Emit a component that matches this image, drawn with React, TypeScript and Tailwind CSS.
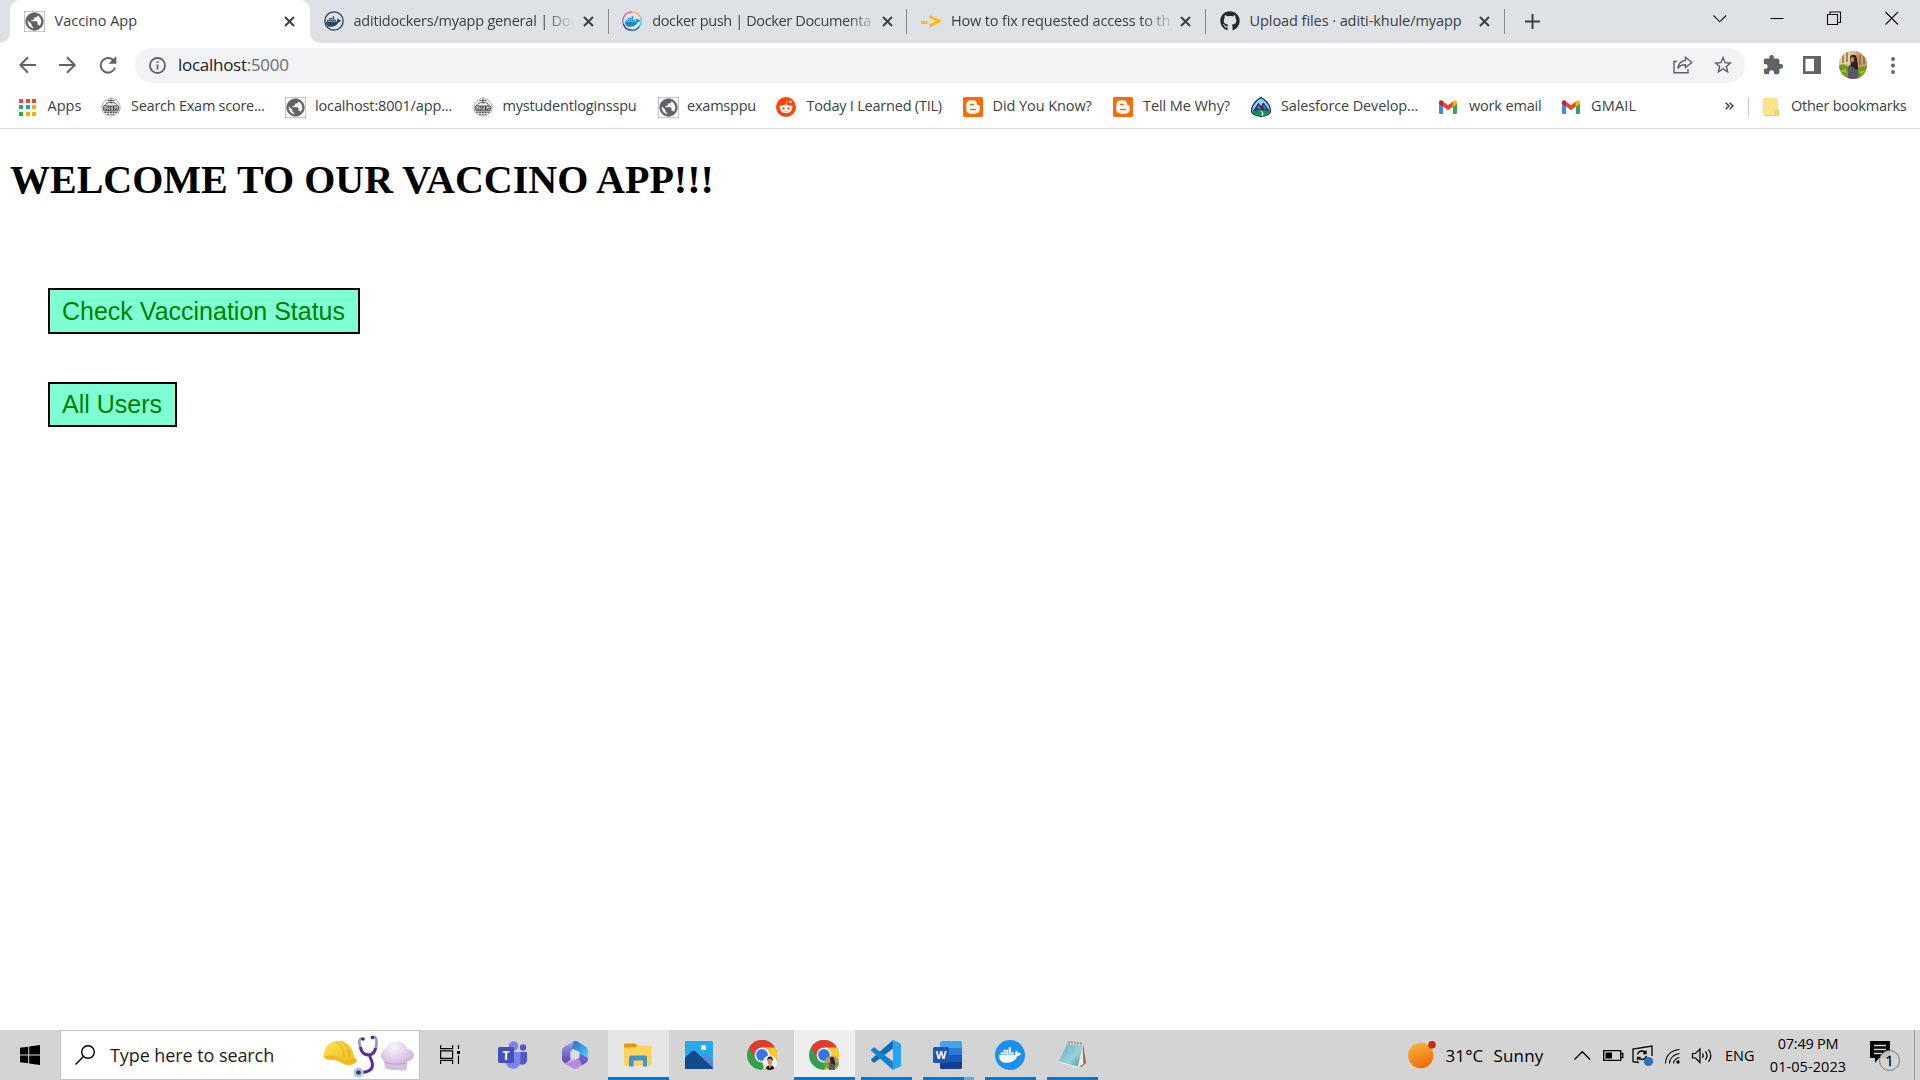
import React from "react";
import { FaGithub, FaDocker, FaRedditAlien } from "react-icons/fa";
import { SiBlogger } from "react-icons/si";
import { MdExtension, MdStarBorder, MdPublic } from "react-icons/md";

/* ---------- Small icons ---------- */

const Globe = () => <MdPublic className="-m-[1.5px] size-[21px] shrink-0 stroke-[#5f6368] stroke-[0.8] text-[#5f6368]" />;

const CloseX = () => (
  <svg className="size-[11px] shrink-0" viewBox="0 0 11 11">
    <path d="M1 1l9 9M10 1l-9 9" stroke="#3c4043" strokeWidth="2" />
  </svg>
);

const DockerRound = ({ multi = false }: { multi?: boolean }) => (
  <span className="relative flex size-5 shrink-0 items-center justify-center">
    <svg className="absolute inset-0 size-5" viewBox="0 0 20 20" fill="none" strokeWidth="1.3">
      {multi ? (
        <>
          <path d="M10 .8A9.2 9.2 0 0 1 18.5 6.500" stroke="#f9a86b" />
          <path d="M18.500 6.500A9.200 9.200 0 0 1 17.500 15.300" stroke="#35d6e6" />
          <path d="M17.500 15.300A9.200 9.200 0 0 1 10 19.200" stroke="#1d5fc4" />
          <path d="M10 19.200A9.200 9.200 0 0 1 1.200 12.500" stroke="#27408b" />
          <path d="M1.200 12.500A9.200 9.200 0 0 1 2.800 4.300" stroke="#b06ad4" />
          <path d="M2.800 4.300A9.200 9.200 0 0 1 10 .8" stroke="#f2545b" />
        </>
      ) : (
        <circle cx="10" cy="10" r="9.2" stroke="#27475d" />
      )}
    </svg>
    <FaDocker className={multi ? "size-[15px] text-[#1488c6]" : "size-[15px] text-[#27475d]"} />
  </span>
);

const ArrowTag = () => (
  <svg className="size-5 shrink-0" viewBox="0 0 20 20" fill="none" stroke="#fdbc13" strokeWidth="3">
    <path d="M0 11.500h6.500M8.500 5.500l10 4.600-10 4.700" />
  </svg>
);

const AppsGrid = () => {
  const c = ["#f44336", "#f44336", "#f44336", "#34a853", "#2196f3", "#fbaa05", "#34a853", "#fbaa05", "#fbaa05"];
  return (
    <span className="grid grid-cols-3 gap-[2.5px]">
      {c.map((x, i) => (
        <i key={i} className="size-1" style={{ background: x }} />
      ))}
    </span>
  );
};

const Emblem = () => (
  <svg className="size-5 shrink-0" viewBox="0 0 20 20" fill="none" stroke="#555" strokeWidth=".8">
    <path d="M10 .5l4 1.800 3.500 2.700 1.800 4.500-.8 5-3 3-5.500 2-5.500-2-3-3-.8-5L2.500 5 6 2.300z" fill="#ececec" stroke="#aaa" />
    <path d="M10 1.500v5M6.500 3.500h7M5 6.500c3-1.500 7-1.500 10 0" stroke="#444" />
    <path d="M2 10.500c1-3 3-3 4.500-1.500h7c1.500-1.500 3.500-1.500 4.500 1.500l-1 3.500H3z" fill="#999" stroke="#444" />
    <path d="M4 11l2 2m1.500-3.500v4m2.500-4v4m2.500-4v4m3.500-2.500l-2 2" stroke="#222" />
    <path d="M7.200 10.500v2m3.800-2.500v3M4.500 10v1.500M15 10v1.500" stroke="#eee" />
    <path d="M3.500 15.500h13M6 17.300h8" stroke="#555" strokeWidth="1.100" strokeDasharray="2 .7" />
  </svg>
);

const Reddit = () => (
  <span className="flex size-5 shrink-0 items-center justify-center rounded-full bg-[#ff4500]">
    <FaRedditAlien className="size-[14px] text-white" />
  </span>
);

const Blogger = () => <SiBlogger className="size-5 shrink-0 text-[#ff6a00]" />;

const Trailhead = () => (
  <svg className="size-5 shrink-0" viewBox="0 0 20 20">
    <path d="M10 .6C6.500 2 1.800 6.500.7 12c-.4 2.500.2 4.300 1.800 5.200 4 2.700 11 2.700 15 0 1.600-.9 2.200-2.700 1.800-5.200C18.200 6.500 13.500 2 10 .6z" fill="#8ed0f5" stroke="#12365f" strokeWidth="1.300" />
    <path d="M2.500 14l5-7.500 2.500 3.500 2.500-4 5.500 8z" fill="#3c2f74" stroke="#1b2858" />
    <path d="M6 10l1.500-2 2 3-1 2zM12 9l1-1.500 2 4-1.500 1z" fill="#9a5fb0" />
    <path d="M1.500 14c4-1.500 13-1.500 17 0-.2 1.500-.8 2.300-1.800 2.800-4 2.300-9.500 2.300-13.400 0-1-.5-1.600-1.300-1.800-2.800z" fill="#0c9150" />
    <path d="M9.300 14l1.800 1.800-.8 2.600h1.800l.2-3-2-1.600z" fill="#fff" />
  </svg>
);

const Gmail = () => (
  <svg className="h-[14px] w-[18px] shrink-0" viewBox="0 0 18 14">
    <path d="M0 2h4.100v12H1.200A1.200 1.200 0 0 1 0 12.800z" fill="#4285f4" />
    <path d="M13.900 2H18v10.800a1.200 1.200 0 0 1-1.200 1.200h-2.900z" fill="#34a853" />
    <path d="M4.100 1.400L9 5.200l4.900-3.800v5.200L9 10.300 4.100 6.600z" fill="#ea4335" />
    <path d="M13.900 1.400l.9-.8C16.100-.4 18 .5 18 2.100V3.800l-4.100 3z" fill="#fbbc04" />
    <path d="M0 2.100C0 .5 1.900-.4 3.200.6l.9.800v5.400L0 3.800z" fill="#c5221f" />
  </svg>
);

/* ---------- Tab strip ---------- */

type Tab = { icon: React.ReactNode; title: string; cls: string };

const tabs: Tab[] = [
  {
    icon: <DockerRound />,
    title: "aditidockers/myapp general | Doc",
    cls: "tracking-[-0.22px] [mask-image:linear-gradient(to_right,black_190px,transparent_220px)]",
  },
  {
    icon: <DockerRound multi />,
    title: "docker push | Docker Documenta",
    cls: "tracking-[-0.36px] [mask-image:linear-gradient(to_right,black_195px,transparent_228px)]",
  },
  {
    icon: <ArrowTag />,
    title: "How to fix requested access to th",
    cls: "tracking-[-0.15px] [mask-image:linear-gradient(to_right,black_190px,transparent_226px)]",
  },
  {
    icon: <FaGithub className="size-5 shrink-0 text-[#24292f]" />,
    title: "Upload files · aditi-khule/myapp",
    cls: "tracking-[-0.07px]",
  },
];

const TabStrip = () => (
  <div className="flex h-[43px] bg-[#dee1e6]">
    <div className="w-[10px] bg-white">
      <div className="size-full rounded-br-[10px] bg-[#dee1e6]" />
    </div>
    <div className="flex w-[300px] items-center rounded-t-[10px] bg-white pr-[15px] pb-px pl-[15.5px]">
      <Globe />
      <span className="ml-[11px] flex-1 text-[14.5px]">Vaccino App</span>
      <CloseX />
    </div>
    <div className="w-[13px] bg-white">
      <div className="size-full rounded-bl-[10px] bg-[#dee1e6]" />
    </div>
    {tabs.map((t, i) => (
      <div key={i} className="flex w-[298.7px] items-center pb-px">
        <span className="ml-[0.5px] flex">{t.icon}</span>
        <span className="ml-[10px] flex w-[220px]">
          <span className={"shrink-0 text-[14.5px] whitespace-nowrap " + t.cls}>{t.title}</span>
        </span>
        <span className="ml-[9.500px]">
          <CloseX />
        </span>
        <span className="mt-px ml-[13.500px] h-[25px] w-px bg-[#85888c]" />
      </div>
    ))}
    <svg className="mt-[14px] ml-[7px] size-[15px]" viewBox="0 0 15 15">
      <path d="M7.500 0v15M0 7.500h15" stroke="#3c4043" strokeWidth="2" />
    </svg>
    <div className="ml-auto flex h-9 items-center pr-[21.5px]">
      <svg className="h-[14px] w-[186px]" viewBox="0 0 186 14" fill="none" stroke="#111" strokeWidth="1.100">
        <path d="M.5 4.500l6.300 6.300 6.300-6.300" />
        <path d="M57.500 7.500h13" />
        <path d="M114.500 3.500h10v10h-10zM117 3.500v-2.500h10.500v10.500h-3" />
        <path d="M172.500 1l12.500 12.500M185 1l-12.500 12.500" />
      </svg>
    </div>
  </div>
);

/* ---------- Address row ---------- */

const Avatar = () => (
  <svg className="size-7 rounded-full" viewBox="0 0 28 28">
    <rect width="28" height="28" fill="#d9bd92" />
    <path d="M0 0h11v13H0z" fill="#e9cf9f" />
    <path d="M17 0h11v16H17z" fill="#c89a6c" />
    <path d="M4 3v9M8 1v10M21 4v10M25 5v8" stroke="#8d6a4b" strokeWidth="1.500" />
    <path d="M0 15c4-3 7-1 9 1v12H0zM18 17c4-2 7-1 10-2v13H18z" fill="#6f9a1e" />
    <path d="M1 20l5-2 2 4zM20 21l6-2-3 4z" fill="#a5c63b" />
    <path d="M9 16c1-2 3-2.500 5-2.500s4 1 4.500 3L20 28H9z" fill="#5c5866" />
    <path d="M11 6c1-3 6-3 6.500 0 1 4 2 9 1.500 13l-3-1-4-3z" fill="#30221f" />
    <ellipse cx="13.300" cy="8.500" rx="1.900" ry="2.700" fill="#b98263" />
  </svg>
);

const AddressRow = () => (
  <div className="flex h-[43px] items-center bg-white pt-px pl-[19px]">
    <svg className="h-[18px] w-[98px]" viewBox="0 0 98 18" fill="none" stroke="#5f6368" strokeWidth="2">
      <path d="M17 9H1.500M9 1.300L1.300 9 9 16.700" />
      <path d="M40 9h15.500M48 1.300L55.700 9 48 16.700" />
      <path d="M95 5A7.300 7.300 0 1 0 96 11.500" />
      <path d="M97.300 0v7.800h-7.800z" fill="#5f6368" stroke="none" />
    </svg>
    <div className="ml-[18px] flex h-[35px] w-[1610px] items-center rounded-full bg-[#f1f3f4] pr-[11px] pl-[14px]">
      <svg className="size-[17px]" viewBox="0 0 17 17" fill="none" stroke="#5f6368" strokeWidth="1.800">
        <circle cx="8.500" cy="8.500" r="7.500" />
        <path d="M8.500 7.500v5M8.500 4.200v1.900" />
      </svg>
      <span className="ml-[12px] flex-1 text-[17px] tracking-[-0.28px] text-[#202124]">
        localhost<span className="text-[#6a6e73]">:5000</span>
      </span>
      <svg className="mr-[19px] h-[18px] w-5" viewBox="0 0 20 18" fill="none" stroke="#5f6368" strokeWidth="1.400">
        <path d="M4 5.500H1v11.300h14V13" />
        <path d="M12.500 1.300l6.300 5.200-6.300 5V8.700C9 8.500 6.500 9.700 4.800 12.500 5.300 8 8 5 12.500 4.300z" />
      </svg>
      <MdStarBorder className="size-[22px] text-[#5f6368]" />
    </div>
    <MdExtension className="ml-[17px] size-[22px] text-[#5f6368]" />
    <svg className="ml-[19px] size-[18px]" viewBox="0 0 18 18">
      <path d="M0 0h18v18H0zM2.500 2.800v12.400H11V2.800z" fill="#5f6368" fillRule="evenodd" />
    </svg>
    <span className="ml-[18px]">
      <Avatar />
    </span>
    <svg className="ml-[23.5px] h-[17px] w-1" viewBox="0 0 4 17" fill="#5f6368">
      <circle cx="2" cy="2" r="1.900" />
      <circle cx="2" cy="8.500" r="1.900" />
      <circle cx="2" cy="15" r="1.900" />
    </svg>
  </div>
);

/* ---------- Bookmarks bar ---------- */

const bookmarks: { icon: React.ReactNode; label: string; box: string; pad: string; track: string }[] = [
  { icon: <AppsGrid />, label: "Apps", box: "w-[82px]", pad: "w-[28.5px]", track: "" },
  { icon: <Emblem />, label: "Search Exam score...", box: "w-[185px]", pad: "w-[30px]", track: "tracking-[-0.25px]" },
  { icon: <Globe />, label: "localhost:8001/app...", box: "w-[187px]", pad: "w-[29px]", track: "tracking-[-0.15px]" },
  { icon: <Emblem />, label: "mystudentloginsspu", box: "w-[186px]", pad: "w-[29.5px]", track: "tracking-[-0.17px]" },
  { icon: <Globe />, label: "examsppu", box: "w-[117px]", pad: "w-[28px]", track: "tracking-[-0.22px]" },
  { icon: <Reddit />, label: "Today I Learned (TIL)", box: "w-[187px]", pad: "w-[30.5px]", track: "tracking-[-0.22px]" },
  { icon: <Blogger />, label: "Did You Know?", box: "w-[150px]", pad: "w-[29.5px]", track: "tracking-[-0.08px]" },
  { icon: <Blogger />, label: "Tell Me Why?", box: "w-[138px]", pad: "w-[30px]", track: "tracking-[-0.08px]" },
  { icon: <Trailhead />, label: "Salesforce Develop...", box: "w-[188px]", pad: "w-[30px]", track: "tracking-[-0.13px]" },
  { icon: <Gmail />, label: "work email", box: "w-[123px]", pad: "w-[30px]", track: "tracking-[-0.17px]" },
  { icon: <Gmail />, label: "GMAIL", box: "w-[163px]", pad: "w-[29px]", track: "tracking-[0.2px]" },
];

const BookmarksBar = () => (
  <div className="flex h-[43px] items-center border-b border-[#d5d7da] bg-white pl-[19px] text-[14.5px]">
    {bookmarks.map((b, i) => (
      <div key={i} className={"flex shrink-0 items-center whitespace-nowrap " + b.box}>
        <span className={"flex shrink-0 " + b.pad}>{b.icon}</span>
        <span className={"pb-[2px] " + b.track}>{b.label}</span>
      </div>
    ))}
    <svg className="mb-[2px] h-2 w-[9px]" viewBox="0 0 9 8" fill="none" stroke="#3c4043" strokeWidth="1.500">
      <path d="M.7.700L4 4 .7 7.300M4.700.700L8 4 4.700 7.300" />
    </svg>
    <span className="ml-[14px] h-5 w-px bg-[#c6c9cd]" />
    <svg className="ml-[14px] h-[18px] w-4" viewBox="0 0 16 18">
      <rect width="15" height="18" rx="1.500" fill="#ffe28a" />
      <path d="M15 11.500V17M12.500 17.500v-4.500q0-1 1-1h1q1 0 1 1V16q0 1.500-1.500 1.500H2" fill="none" stroke="#f5cb4d" strokeWidth="1.100" />
    </svg>
    <span className="ml-[12px] pb-[2px] tracking-[-0.24px] whitespace-nowrap">Other bookmarks</span>
  </div>
);

/* ---------- Page ---------- */

const PageButton = ({ children }: { children: React.ReactNode }) => (
  <button className="block border-2 border-black bg-[#7fffd4] pr-[12.500px] pl-3 font-['Liberation_Sans',Arial,sans-serif] text-[25px] text-[#008000]">
    {children}
  </button>
);

const Page = () => (
  <main className="flex-1 bg-white">
    <h1 className="pt-[28px] pl-[10px] font-['Liberation_Serif','Times_New_Roman',serif] text-[40px] leading-[46px] font-bold text-black">
      WELCOME TO OUR VACCINO APP!!!
    </h1>
    <div className="mt-[85px] ml-12 flex flex-col items-start gap-12">
      <div className="flex h-[46px] [&>button]:leading-[40px]">
        <PageButton>Check Vaccination Status</PageButton>
      </div>
      <div className="flex h-[45px] [&>button]:leading-[41px]">
        <PageButton>All Users</PageButton>
      </div>
    </div>
  </main>
);

/* ---------- Taskbar ---------- */

const StartLogo = () => (
  <svg className="size-5" viewBox="0 0 20 20">
    <path d="M0 2.800L8.200 1.700V9.500H0zM9.200 1.500L20 0v9.500H9.200zM0 10.500h8.200v7.800L0 17.200zM9.200 10.500H20V20L9.200 18.500z" />
  </svg>
);

const SearchArt = () => (
  <svg className="h-[46px] w-[92px]" viewBox="0 0 92 46">
    <defs>
      <radialGradient id="hat" cx=".4" cy=".2" r=".8">
        <stop offset="0" stopColor="#f8f3fb" />
        <stop offset=".5" stopColor="#e0d0ea" />
        <stop offset="1" stopColor="#c0a6d4" />
      </radialGradient>
      <linearGradient id="helm" x1="0" y1="0" x2="1" y2="1">
        <stop offset="0" stopColor="#ffe45c" />
        <stop offset="1" stopColor="#eeb410" />
      </linearGradient>
    </defs>
    <path d="M1 25C0 14 8 8 16 9c8 0 14 6 15 16l3 3c.5 2-4 5-9 5-4 0-6-3-11-4.500C9 27 3 29 1 25z" fill="url(#helm)" />
    <path d="M1 24.500c4-1.500 11-1 15 1.500 4 2 8 4 14 .5l3.500 1.500c.5 2-4 5-8.500 5-4 0-6-3-11-4.500C9 27 3 29 1 24.500z" fill="#f0b81a" />
    <path d="M13 10c5 2 8 8 8 16M17 9.200c6 2 9 7 9.500 16" fill="none" stroke="#e3b020" strokeWidth="1" />
    <path d="M39 6.500c-2.500 0-3 2-2.500 5 .5 8 4 11 9 11s8-4 8-12c0-4-.5-6-3.500-5.500" fill="none" stroke="#8f9bb0" strokeWidth="2.600" />
    <path d="M37.500 15c1 6 4 8 8 8s6-2 7-7M46.500 23c1 4 3 6 3 10 0 5-5 7-10 7.500" fill="none" stroke="#5a2ca0" strokeWidth="3" />
    <circle cx="40" cy="7" r="1.800" fill="#43248a" />
    <circle cx="49.500" cy="5.500" r="1.800" fill="#43248a" />
    <circle cx="35.500" cy="40.500" r="5" fill="#a9c8ea" />
    <circle cx="35.500" cy="40.500" r="2.300" fill="#333c4c" />
    <path d="M61 29c-5-3-4-11 2-12 1-5 6-7.500 11-7.500S83 12 84 17c7 0 9 8 4 11-1 1-3 1.500-4 1.500L83.500 38C77 38.500 68 38 62 36z" fill="url(#hat)" />
    <path d="M62 30.500c7 2 15 2.500 22 0L83.500 38C77 38.500 68 38 62 36z" fill="#d3c0e2" />
    <path d="M62 30.500c7 2 15 2.500 22 0" stroke="#b79ccc" fill="none" strokeWidth=".8" />
  </svg>
);

const TaskView = () => (
  <svg className="h-[19px] w-5" viewBox="0 0 20 19" fill="none" stroke="#000" strokeWidth="1.200">
    <path d="M.6 0v3.600h12V0M.6 19v-3.600h12V19M.6 5.800h12v7.600H.6zM18.500 0v4M18.500 10.500V19" />
    <path d="M17 6h3v3h-3z" fill="#000" stroke="none" />
  </svg>
);

const Teams = () => (
  <svg className="h-[28px] w-[29px]" viewBox="0 0 29 28">
    <circle cx="15.500" cy="5" r="4.800" fill="#7b83eb" />
    <circle cx="25" cy="6.500" r="3.200" fill="#5059c9" />
    <path d="M19 11h10v8c0 5-6 6-9 3z" fill="#5059c9" />
    <path d="M9 11h13.500v9c0 10-13.500 10-15 1z" fill="#7b83eb" />
    <rect y="6" width="16" height="16" rx="1.500" fill="#464eb8" />
    <text x="8" y="18.500" fontSize="12" fontWeight="700" fill="#fff" textAnchor="middle" fontFamily="Open Sans, sans-serif">T</text>
  </svg>
);

const M365 = () => (
  <svg className="h-[28px] w-[26px]" viewBox="0 0 26 28">
    <defs>
      <linearGradient id="mb" x1="0" y1="0" x2="1" y2="1">
        <stop offset="0" stopColor="#1f6fd0" />
        <stop offset="1" stopColor="#55d8f5" />
      </linearGradient>
      <linearGradient id="mp" x1="0" y1="0" x2="0" y2="1">
        <stop offset="0" stopColor="#9aa4f5" />
        <stop offset="1" stopColor="#5b45a8" />
      </linearGradient>
    </defs>
    <path d="M12 0L2 6Q0 7 0 9.500v9.500l3 3.500L8.500 19v-8l6-9z" fill="url(#mp)" />
    <path d="M12 .3q2-.8 4 .4l8 5q2 1.300 2 3.500V19l-8.500-3.500V11L10 7.500z" fill="url(#mb)" />
    <path d="M26 17q0 3.500-2 4.700l-8.500 5.500q-2.500 1.500-5 0L1 21.500q3 1.500 6-.3l10-6z" fill="#b78be0" />
    <path d="M26 17q0 3.500-2 4.700l-4 2.500-4-8.200 2-3z" fill="#6d5bd0" />
    <path d="M13 9l4.500 2.500v5L13 19l-4.500-2.500v-5z" fill="#dcdcdc" />
  </svg>
);

const Explorer = () => (
  <svg className="h-6 w-7" viewBox="0 0 28 24">
    <path d="M0 1.500Q0 .5 1 .5h10.500l2 2-1.500 2.500H0z" fill="#e29a00" />
    <path d="M0 4.500h11l2.500-2H26q1.500 0 1.500 1.500v17q0 1.500-1.500 1.500H1.500Q0 22.500 0 21z" fill="#ffd45c" />
    <path d="M5 23.500v-9q0-2 2-2h14q2 0 2 2v9h-4v-6H9.500v6z" fill="#3e95d2" />
  </svg>
);

const Photos = () => (
  <svg className="size-7" viewBox="0 0 28 28">
    <rect width="28" height="28" rx="1" fill="#28aae8" />
    <path d="M12 20l8-7.500 8 8V28H12z" fill="#5a86d8" />
    <path d="M0 16.500l6.500-6q2-1.500 4 0L28 27v1H0z" fill="#124a8a" />
    <circle cx="18.500" cy="6.500" r="2.600" fill="#fff" />
  </svg>
);

const Chrome = ({ badge }: { badge: "portrait" | "garden" }) => (
  <svg className="size-[30px]" viewBox="0 0 30 30">
    <circle cx="15" cy="15" r="15" fill="#34a04c" />
    <path d="M15 0a15 15 0 0 1 13 7.500H15L8.500 18.800 2 7.500A15 15 0 0 1 15 0z" fill="#e33b2e" />
    <path d="M28 7.500A15 15 0 0 1 15 30l6.500-11.200L15 7.500z" fill="#fcc934" />
    <circle cx="15" cy="15" r="7.400" fill="#fff" />
    <circle cx="15" cy="15" r="5.900" fill="#3578e5" />
    {badge === "portrait" ? (
      <g>
        <circle cx="22.800" cy="22.800" r="7.200" fill="#f3f1ee" />
        <path d="M18.800 28.700q.5-3.200 4.200-3.200t4.300 2.700q-4 3.500-8.500.5z" fill="#1d1b1d" />
        <path d="M20.300 20.500q-.3-4 2.700-4t2.900 4z" fill="#2b1a16" />
        <ellipse cx="23" cy="21.700" rx="2.200" ry="3.300" fill="#d08f6e" />
        <path d="M21.500 25l1.500 4 1.500-4z" fill="#d98a6a" />
      </g>
    ) : (
      <g>
        <circle cx="22.800" cy="22.800" r="7.200" fill="#b79a76" />
        <path d="M16 23q3-1 4 0v6q-3.500-1.500-4-6zM26 23q2-1 4 0-.5 4-4 6z" fill="#80a32e" />
        <path d="M20 30v-7q3-2 6 0v6.500q-3 1.200-6 .5z" fill="#5c5866" />
        <path d="M21 18q2-2 4 0l1.500 7-5-2z" fill="#2f2421" />
      </g>
    )}
  </svg>
);

const VSCode = () => (
  <svg className="size-[30px]" viewBox="0 0 30 30">
    <path d="M22 0v8.500L4 22.300Q3 23 2.200 22.300L.5 20.700q-.8-.9 0-1.700z" fill="#0a6fb8" />
    <path d="M22 30v-8.500L4 7.700Q3 7 2.200 7.700L.5 9.300q-.8.900 0 1.700z" fill="#1583cc" />
    <path d="M21.500 29.800q-1-.3-1.500-1.300l2-1V2.500l-2-1Q20.800.2 22 0l6.700 3Q30 3.700 30 5v20q0 1.300-1.300 2z" fill="#27a4ee" />
  </svg>
);

const Word = () => (
  <svg className="h-7 w-[29px]" viewBox="0 0 29 28">
    <path d="M7 1.500Q7 0 8.500 0H27.500Q29 0 29 1.500V7H7z" fill="#41a5ee" />
    <path d="M7 7h22v7H7z" fill="#2b7cd3" />
    <path d="M7 14h22v7H7z" fill="#185abd" />
    <path d="M7 21h22v5.500q0 1.500-1.500 1.500h-19Q7 28 7 26.500z" fill="#103f91" />
    <rect y="6" width="16" height="16" rx="1.500" fill="#1b57b4" />
    <text x="8" y="18" fontSize="11" fontWeight="700" fill="#fff" textAnchor="middle" fontFamily="Open Sans, sans-serif">W</text>
  </svg>
);

const DockerApp = () => (
  <span className="flex size-[30px] items-center justify-center rounded-full bg-[#1d8fee]">
    <FaDocker className="size-[22px] text-white" />
  </span>
);

const Notepad = () => (
  <svg className="h-[27px] w-7" viewBox="0 0 28 27">
    <defs>
      <linearGradient id="np" x1="0" y1="0" x2="1" y2="1">
        <stop offset="0" stopColor="#5fb0b8" />
        <stop offset=".6" stopColor="#98d3da" />
        <stop offset="1" stopColor="#3d8d96" />
      </linearGradient>
    </defs>
    <path d="M25 3l3 19-5 4-3-2z" fill="#8a6a48" />
    <path d="M24.500 3l1 20-6 3.500z" fill="#efe9de" />
    <path d="M9.500 1.500L25 3l-5.500 23L.5 21z" fill="url(#np)" />
    <path d="M9.500 1.500L25 3l-.5 2L9 3.300z" fill="#d9dede" />
    <path d="M11 0v3M14 .3v3M17 .6v3M20 1v3M23 1.300v3" stroke="#666" strokeWidth=".9" />
    <path d="M1 20.500l19 5-.5 1.300L.5 21.500z" fill="#dff1f2" />
  </svg>
);

type TaskApp = { icon: React.ReactNode; cls: string; bar?: React.ReactNode };
const blueBar = <span className="h-[3px] w-full bg-[#0078d7]" />;

const apps: TaskApp[] = [
  { icon: <TaskView />, cls: "w-[61px]" },
  { icon: <Teams />, cls: "w-[65px]" },
  { icon: <M365 />, cls: "w-[60px]" },
  { icon: <Explorer />, cls: "ml-[2px] w-[61px] bg-[#e6e6e6]", bar: blueBar },
  { icon: <Photos />, cls: "w-[62px]" },
  { icon: <Chrome badge="portrait" />, cls: "w-[63px]" },
  { icon: <Chrome badge="garden" />, cls: "w-[61px] bg-[#eeeeee]", bar: blueBar },
  { icon: <VSCode />, cls: "ml-[6px] w-[51px]", bar: blueBar },
  {
    icon: <Word />,
    cls: "ml-[11px] w-[51px]",
    bar: (
      <span className="flex h-[3px] w-full">
        <i className="w-[41px] bg-[#0078d7]" />
        <i className="w-[10px] bg-[#60abe6]" />
      </span>
    ),
  },
  { icon: <DockerApp />, cls: "ml-[11px] w-[51px]", bar: blueBar },
  { icon: <Notepad />, cls: "ml-[11px] w-[51px]", bar: blueBar },
];

const Taskbar = () => (
  <footer className="flex h-[50px] bg-[#d4d4d4] text-black">
    <div className="flex w-[60px] items-center justify-center">
      <StartLogo />
    </div>
    <div className="flex w-[360px] items-center border border-[#c4c4c4] bg-white pl-[14px]">
      <svg className="size-5" viewBox="0 0 20 20" fill="none" stroke="#000" strokeWidth="1.400">
        <circle cx="13" cy="7" r="6.300" />
        <path d="M8.500 11.500L.5 19.500" />
      </svg>
      <span className="ml-[15px] flex-1 text-[18px] tracking-[-0.08px] whitespace-nowrap text-[#1c1c1c]">Type here to search</span>
      <span className="mr-[4px]">
        <SearchArt />
      </span>
    </div>
    {apps.map((a, i) => (
      <div key={i} className={"flex shrink-0 flex-col items-center " + a.cls}>
        <span className="flex h-[47px] items-center pt-[2.5px] pr-[2px]">{a.icon}</span>
        {a.bar}
      </div>
    ))}
    <div className="ml-auto flex items-center text-[17px]">
      <svg className="h-[29px] w-7" viewBox="0 0 28 29">
        <defs>
          <linearGradient id="sun" x1=".2" y1="0" x2=".6" y2="1">
            <stop offset="0" stopColor="#f2b631" />
            <stop offset="1" stopColor="#f26a0e" />
          </linearGradient>
        </defs>
        <circle cx="12.800" cy="14.500" r="12.700" fill="url(#sun)" />
        <circle cx="24" cy="3.800" r="3.800" fill="#c42b1c" />
      </svg>
      <span className="mt-px ml-[9.500px] w-[48px] tracking-[0.14px]">31°C</span>
      <span className="mt-px w-[80.5px] tracking-[0.17px]">Sunny</span>
      <svg className="h-[21px] w-[140px]" viewBox="0 0 140 21" fill="none" stroke="#000" strokeWidth="1.300">
        <path d="M.5 14.500L8.300 6.700l7.800 7.800" />
        <path d="M29.700 5.700h17v9.600h-17zM47.300 8.500h1.500v4h-1.500" />
        <path d="M31.500 7.500h6.500v6h-6.500z" fill="#000" stroke="none" />
        <path d="M65 17.500l-6-.8V4l19-3v10" />
        <path d="M63.500 9.500q1-3.500 4.500-3.500 2.500 0 4 2M72 5.500v3h-3M72.500 11q-1.500 3.500-4.500 3.500-2.500 0-4-2M63.500 15.500v-3h3" />
        <circle cx="74.500" cy="16.500" r="4.600" fill="#2b72b8" stroke="none" />
        <path d="M91.500 18.500Q92 6 105.500 4.500M95.500 18.500Q96 10 105.500 8.500M99.500 18.500Q100 13.500 105.500 12.500" strokeWidth="1.100" />
        <circle cx="104" cy="17" r="1.700" fill="#000" stroke="none" />
        <path d="M118.500 8.500h3l4.500-4.500v13.500l-4.500-4.500h-3zM128.500 8.300q1.500 2.300 0 4.500M131.500 6.300q3 4.300 0 8.500M134.500 4.300q4.500 6.200 0 12.500" strokeWidth="1.200" />
      </svg>
      <span className="mt-px ml-[11px] text-[14.5px]">ENG</span>
      <div className="ml-[13.500px] flex w-[80px] flex-col items-center pt-px text-[14.5px] leading-[22.500px] whitespace-nowrap">
        <span className="tracking-[-0.25px]">07:49 PM</span>
        <span className="tracking-[0.08px]">01-05-2023</span>
      </div>
      <svg className="ml-[22px] h-[32px] w-[31px]" viewBox="0 0 31 32">
        <path d="M0 2h20v17H9l-4 5v-5H0z" fill="#000" />
        <path d="M4 6.500h12M4 10.500h12M4 14.500h8" stroke="#d4d4d4" strokeWidth="1.400" />
        <circle cx="19.500" cy="21.500" r="10" fill="#d4d4d4" fillOpacity=".9" stroke="#777" />
        <text x="19.500" y="27" fontSize="15" fill="#000" stroke="#000" strokeWidth=".3" textAnchor="middle" fontFamily="Open Sans, sans-serif">1</text>
      </svg>
      <span className="ml-[13px] h-full w-px bg-[#9c9c9c]" />
      <span className="w-[5px]" />
    </div>
  </footer>
);

export default function App() {
  return (
    <div className="flex h-[1080px] w-[1920px] flex-col overflow-hidden bg-white font-['Open_Sans','Noto_Sans',sans-serif] text-[#3c4043]">
      <TabStrip />
      <AddressRow />
      <BookmarksBar />
      <Page />
      <Taskbar />
    </div>
  );
}
